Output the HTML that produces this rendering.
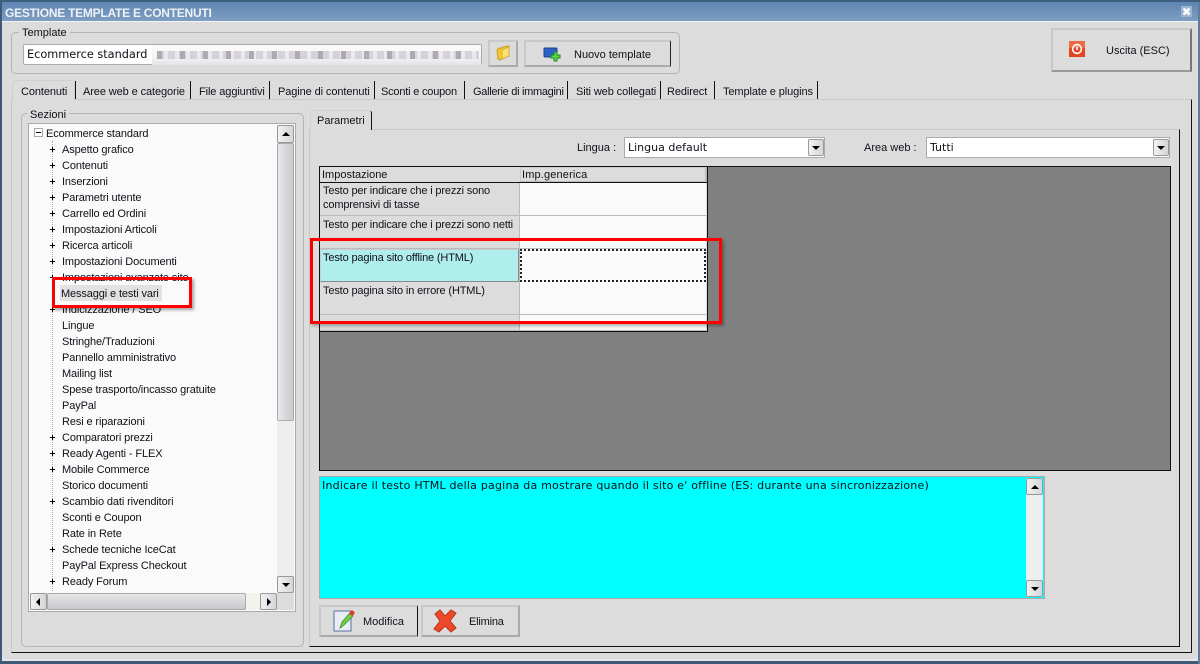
<!DOCTYPE html>
<html><head><meta charset="utf-8"><style>
html,body{margin:0;padding:0}
body{width:1200px;height:664px;overflow:hidden;position:relative;background:#dcdcdc;font:11px/14px "Liberation Sans",sans-serif;color:#101018}
div,span,svg{position:absolute;box-sizing:border-box;white-space:nowrap}
.v{font-family:"DejaVu Sans",sans-serif}
.t{top:85px;letter-spacing:-.1px}
.sep{top:81px;width:1px;height:18px;background:#111}
.r{left:62px;height:14px;margin-top:1px;letter-spacing:-.12px}
.btn{background:#dcdcdc;border:2px solid #c8c8c8;border-bottom-color:#aaa;border-right-color:#aaa}
.sb{width:17px;height:17px;border:1px solid #999;border-radius:2px;background:linear-gradient(90deg,#f2f2f2,#d5d5d8)}
.u{width:0;height:0;border-left:4px solid transparent;border-right:4px solid transparent;border-bottom:4px solid #000;left:4px;top:6px}
.d{width:0;height:0;border-left:4px solid transparent;border-right:4px solid transparent;border-top:4px solid #000;left:4px;top:6px}
.c{left:320px;width:199px;background:#dcdcdc;border-bottom:1px solid #bbb;padding:2px 0 0 3px;white-space:normal;line-height:14px;letter-spacing:-.15px}
.e{left:520px;width:186px;background:#fafafa;border-bottom:1px solid #bbb}
</style></head><body>
<div style="left:0;top:0;width:1200px;height:664px;border:2px solid #6d89a8;border-top:0"></div>
<div style="left:0;top:0;width:1200px;height:2px;background:#3f5f80"></div>
<div style="left:0;top:2px;width:1200px;height:19px;background:linear-gradient(#5e86b2,#7e9ec2)"></div>
<div style="left:0;top:21px;width:1200px;height:1px;background:#f2f4f6"></div>
<div style="left:0;top:659px;width:1200px;height:2px;background:#e8e8e8"></div>
<div style="left:0;top:661px;width:1200px;height:3px;background:#3f5a76"></div>
<div style="left:0;top:2px;width:2px;height:662px;background:#3f5a76"></div>
<div style="left:1198px;top:2px;width:2px;height:662px;background:#5f7c9c"></div>
<div style="left:5px;top:6px;font:bold 12px/14px 'Liberation Sans',sans-serif;color:#eef2f6;letter-spacing:-.25px">GESTIONE TEMPLATE E CONTENUTI</div>
<div style="left:1181px;top:6px;width:11px;height:11px;background:#9db4cf"></div>
<svg style="left:1181px;top:6px" width="11" height="11"><path d="M2.500 2.500L8.500 8.500M8.500 2.500L2.500 8.500" stroke="#fff" stroke-width="2.400"/></svg>

<div style="left:11px;top:32px;width:669px;height:42px;border:1px solid #b4b4b4;border-radius:5px"></div>
<div style="left:19px;top:26px;background:#dcdcdc;padding:0 3px">Template</div>
<div style="left:23px;top:44px;width:459px;height:21px;background:#fff;border:1px solid #aaa;border-radius:2px"></div>
<div class="v" style="left:27px;top:48px;font-size:11.3px">Ecommerce standard</div>
<div style="left:152px;top:45px;width:329px;height:20px;background:linear-gradient(#fafafa,#f4f4f6 60%,#e4e4e6)"></div>
<div style="left:157px;top:51px;width:322px;height:8px;opacity:.85;background:repeating-linear-gradient(90deg,#a49ca8 0 5px,transparent 5px 23px),repeating-linear-gradient(90deg,#d0ccd4 0 7px,#e8e8ec 7px 11px)"></div>
<div class="btn" style="left:488px;top:40px;width:30px;height:27px"></div>
<svg style="left:495px;top:45px" width="16" height="16"><path d="M2 5L4 3H7L8 2L14 1V11L5 15L3 14Z" fill="#f5c52a" stroke="#c79a2a"/><path d="M7 5L14 2V11L7 14Z" fill="#fbe36e" stroke="#d3a83a" stroke-width=".8"/></svg>
<div class="btn" style="left:524px;top:40px;width:147px;height:27px;border-right:1px solid #222"></div>
<svg style="left:543px;top:47px" width="20" height="16"><rect x="1" y="1" width="13" height="9" rx="1" fill="#2a62c8" stroke="#1f3f8a"/><path d="M11 5h3v3h3v3h-3v3h-3v-3h-3V8h3z" fill="#5cdc4a" stroke="#1c8a20"/></svg>
<div style="left:574px;top:48px">Nuovo template</div>
<div class="btn" style="left:1051px;top:28px;width:141px;height:44px;border-right-color:#777;border-bottom-color:#999"></div>
<svg style="left:1068px;top:40px" width="18" height="18"><rect x="1" y="1" width="16" height="16" fill="#e2451f"/><rect x="1" y="1" width="16" height="7" fill="#ee6a42"/><circle cx="9" cy="9" r="4.400" fill="none" stroke="#fff" stroke-width="1.600"/><path d="M9 6.500V10" stroke="#fff" stroke-width="1.600"/></svg>
<div style="left:1106px;top:44px">Uscita (ESC)</div>

<div style="left:11px;top:99px;width:1181px;height:554px;border:1px solid #c8c8c8;border-right:1px solid #111;border-bottom:1px solid #111"></div>
<div style="left:12px;top:80px;width:63px;height:21px;background:#dcdcdc;border:1px solid #d0d0d0;border-bottom:0;border-radius:3px 3px 0 0"></div>
<div class="t" style="left:21px">Contenuti</div>
<div class="sep" style="left:75px"></div><div class="t" style="left:83px">Aree web e categorie</div>
<div class="sep" style="left:190px"></div><div class="t" style="left:199px">File aggiuntivi</div>
<div class="sep" style="left:269px"></div><div class="t" style="left:278px">Pagine di contenuti</div>
<div class="sep" style="left:374px"></div><div class="t" style="left:381px;letter-spacing:-.2px">Sconti e coupon</div>
<div class="sep" style="left:464px"></div><div class="t" style="left:473px;letter-spacing:-.3px">Gallerie di immagini</div>
<div class="sep" style="left:567px"></div><div class="t" style="left:576px">Siti web collegati</div>
<div class="sep" style="left:660px"></div><div class="t" style="left:667px">Redirect</div>
<div class="sep" style="left:714px"></div><div class="t" style="left:723px">Template e plugins</div>
<div class="sep" style="left:817px"></div>

<div style="left:21px;top:113px;width:283px;height:534px;border:1px solid #b4b4b4;border-radius:5px"></div>
<div style="left:27px;top:108px;background:#dcdcdc;padding:0 3px">Sezioni</div>
<div style="left:28px;top:123px;width:268px;height:489px;background:#fafafa;border:1px solid #aaa"></div>
<div style="top:141px;width:1px;height:450px;border-left:1px dotted #aaa;left:52px"></div>
<svg style="left:34px;top:128px" width="10" height="10"><rect x=".5" y=".5" width="8" height="8" fill="#fff" stroke="#aaa"/><path d="M2 4.500H7" stroke="#000"/></svg>
<div class="r" style="left:46px;top:126px">Ecommerce standard</div>
<div class="r" style="top:142px">Aspetto grafico</div>
<div class="r" style="top:158px">Contenuti</div>
<div class="r" style="top:174px">Inserzioni</div>
<div class="r" style="top:190px">Parametri utente</div>
<div class="r" style="top:206px">Carrello ed Ordini</div>
<div class="r" style="top:222px">Impostazioni Articoli</div>
<div class="r" style="top:238px">Ricerca articoli</div>
<div class="r" style="top:254px">Impostazioni Documenti</div>
<div class="r" style="top:270px">Impostazioni avanzate sito</div>
<div style="left:60px;top:285px;width:102px;height:16px;background:#e2e2e2"></div>
<div class="r" style="left:61px;top:286px">Messaggi e testi vari</div>
<div class="r" style="top:302px">Indicizzazione / SEO</div>
<div class="r" style="top:318px">Lingue</div>
<div class="r" style="top:334px">Stringhe/Traduzioni</div>
<div class="r" style="top:350px">Pannello amministrativo</div>
<div class="r" style="top:366px">Mailing list</div>
<div class="r" style="top:382px">Spese trasporto/incasso gratuite</div>
<div class="r" style="top:398px">PayPal</div>
<div class="r" style="top:414px">Resi e riparazioni</div>
<div class="r" style="top:430px">Comparatori prezzi</div>
<div class="r" style="top:446px">Ready Agenti - FLEX</div>
<div class="r" style="top:462px">Mobile Commerce</div>
<div class="r" style="top:478px">Storico documenti</div>
<div class="r" style="top:494px">Scambio dati rivenditori</div>
<div class="r" style="top:510px">Sconti e Coupon</div>
<div class="r" style="top:526px">Rate in Rete</div>
<div class="r" style="top:542px">Schede tecniche IceCat</div>
<div class="r" style="top:558px">PayPal Express Checkout</div>
<div class="r" style="top:574px">Ready Forum</div>
<svg style="left:48px;top:140px" width="10" height="450" fill="none" stroke="#000"><path d="M2 9.500H7M4.500 7V12M2 25.500H7M4.500 23V28M2 41.500H7M4.500 39V44M2 57.500H7M4.500 55V60M2 73.500H7M4.500 71V76M2 89.500H7M4.500 87V92M2 105.500H7M4.500 103V108M2 121.500H7M4.500 119V124M2 137.500H7M4.500 135V140M2 169.500H7M4.500 167V172M2 297.500H7M4.500 295V300M2 313.500H7M4.500 311V316M2 329.500H7M4.500 327V332M2 361.500H7M4.500 359V364M2 409.500H7M4.500 407V412M2 441.500H7M4.500 439V444"/></svg>
<div style="left:277px;top:125px;width:17px;height:468px;background:#eeeeee"></div>
<div style="left:277px;top:143px;width:17px;height:278px;background:linear-gradient(90deg,#e8e8ea,#c9c9ce);border:1px solid #aaa;border-radius:2px"></div>
<div class="sb" style="left:277px;top:125px;height:18px"><div class="u"></div></div>
<div class="sb" style="left:277px;top:576px"><div class="d"></div></div>
<div style="left:30px;top:593px;width:247px;height:17px;background:#f4f2ec"></div>
<div class="sb" style="left:30px;top:593px"><div style="left:5px;top:4px;width:0;height:0;border-top:4px solid transparent;border-bottom:4px solid transparent;border-right:4px solid #000"></div></div>
<div style="left:47px;top:593px;width:199px;height:17px;background:linear-gradient(#e6e6e8,#c8c8cc);border:1px solid #aaa;border-radius:2px"></div>
<div class="sb" style="left:260px;top:593px"><div style="left:6px;top:4px;width:0;height:0;border-top:4px solid transparent;border-bottom:4px solid transparent;border-left:4px solid #000"></div></div>
<div style="left:277px;top:593px;width:17px;height:17px;background:#dcdcdc"></div>

<div style="left:309px;top:129px;width:871px;height:518px;border:1px solid #c8c8c8;border-right:1px solid #111;border-bottom:1px solid #111"></div>
<div style="left:310px;top:110px;width:62px;height:20px;background:#dcdcdc;border:1px solid #d0d0d0;border-bottom:0;border-right:1px solid #111;border-radius:3px 3px 0 0"></div>
<div style="left:317px;top:114px">Parametri</div>
<div style="left:577px;top:141px">Lingua :</div>
<div style="left:624px;top:137px;width:201px;height:21px;background:#fff;border:1px solid #aaa"></div>
<div class="v" style="left:628px;top:141px">Lingua default</div>
<div class="sb" style="left:808px;top:139px;width:16px"><div class="d" style="left:3px"></div></div>
<div style="left:864px;top:141px">Area web :</div>
<div style="left:926px;top:137px;width:244px;height:21px;background:#fff;border:1px solid #aaa"></div>
<div class="v" style="left:930px;top:141px">Tutti</div>
<div class="sb" style="left:1153px;top:139px;width:16px"><div class="d" style="left:3px"></div></div>

<div style="left:319px;top:166px;width:852px;height:305px;background:#808080;border:1px solid #111"></div>
<div style="left:319px;top:166px;width:389px;height:166px;background:#dcdcdc;border:1px solid #111"></div>
<div style="left:320px;top:182px;width:387px;height:1px;background:#111"></div>
<div style="left:322px;top:168px">Impostazione</div>
<div style="left:520px;top:167px;width:187px;height:15px;border:1px solid #ccc;border-right:2px solid #bbb;border-bottom-color:#bbb"></div>
<div style="left:522px;top:168px;letter-spacing:.15px">Imp.generica</div>
<div class="c" style="top:183px;height:33px;padding-top:1px">Testo per indicare che i prezzi sono comprensivi di tasse</div><div class="e" style="top:183px;height:33px"></div>
<div class="c" style="top:216px;height:33px;white-space:nowrap">Testo per indicare che i prezzi sono netti</div><div class="e" style="top:216px;height:33px"></div>
<div class="c" style="top:249px;height:33px;background:#b0eeee;border:1px solid #888;border-top-color:#ccc;border-left-color:#ccc;padding:1px 0 0 2px">Testo pagina sito offline (HTML)</div>
<div class="e" style="top:249px;height:33px;border:2px dotted #222"></div>
<div class="c" style="top:282px;height:33px">Testo pagina sito in errore (HTML)</div><div class="e" style="top:282px;height:33px"></div>
<div class="c" style="top:315px;height:16px"></div><div class="e" style="top:315px;height:16px"></div>
<div style="left:519px;top:183px;width:1px;height:148px;background:#bbb"></div>

<div style="left:319px;top:476px;width:726px;height:123px;background:#00ffff;border:1px solid #aaa"></div>
<div class="v" style="left:322px;top:479px;letter-spacing:.21px">Indicare il testo HTML della pagina da mostrare quando il sito e' offline (ES: durante una sincronizzazione)</div>
<div style="left:1026px;top:478px;width:17px;height:119px;background:#eee"></div>
<div class="sb" style="left:1026px;top:478px"><div class="u"></div></div>
<div class="sb" style="left:1026px;top:580px"><div class="d"></div></div>

<div class="btn" style="left:319px;top:605px;width:99px;height:32px;border-right:1px solid #111"></div>
<svg style="left:332px;top:609px" width="24" height="24"><rect x="2" y="2" width="17" height="20" fill="#e8ecf4" stroke="#5a70a0"/><path d="M8 19L10 13L18 4L21 7L12 16Z" fill="#72d04a" stroke="#3f8a2a" stroke-width=".8"/><circle cx="20" cy="4" r="2.500" fill="#d9402a"/></svg>
<div style="left:363px;top:615px">Modifica</div>
<div class="btn" style="left:421px;top:605px;width:99px;height:32px"></div>
<svg style="left:432px;top:608px" width="26" height="26"><path d="M3 6L8 2L13 8L19 2L24 5L18 13L24 20L19 24L13 18L7 24L2 21L8 13Z" fill="#f0492a" stroke="#b8301a"/></svg>
<div style="left:469px;top:615px;letter-spacing:-.2px">Elimina</div>

<div style="left:52px;top:277px;width:140px;height:31px;border:3px solid #f00;box-shadow:2px 2px 3px rgba(0,0,0,.35)"></div>
<div style="left:310px;top:238px;width:412px;height:86px;border:3px solid #f00;box-shadow:2px 2px 3px rgba(0,0,0,.3)"></div>
</body></html>
